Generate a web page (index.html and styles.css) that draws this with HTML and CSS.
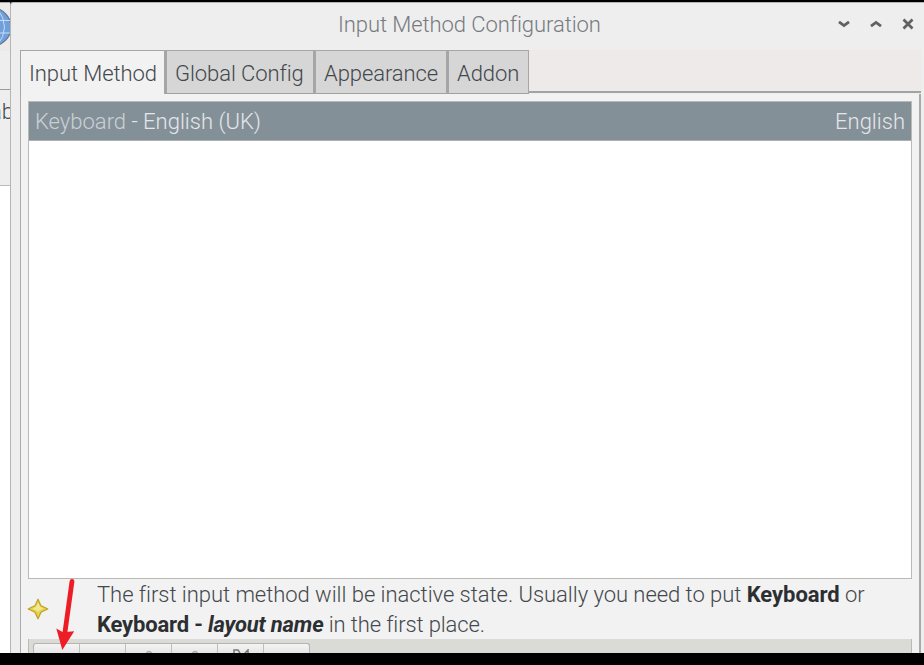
FILE: index.html
```
<!DOCTYPE html>
<html lang="en">
<head>
<meta charset="utf-8">
<title>Input Method Configuration</title>
<link rel="stylesheet" href="styles.css">
</head>
<body>
<div class="screen">
  <aside class="behind">
    <div class="behind-tools">
      <svg class="globe" viewBox="0 0 11 44" width="11" height="44">
        <circle cx="-8" cy="20" r="19" fill="#70a0dc" stroke="#5c7894" stroke-width="1.2"/>
        <path d="M0 13.5H10M0 26H10M-3 1Q12 20-3 39M-6 1Q-2 20-6 39" fill="none" stroke="#c8dcf2" stroke-width="1"/>
      </svg>
    </div>
    <div class="behind-tab"><span class="behind-label">ab</span></div>
    <div class="behind-page"></div>
  </aside>
  <main class="window">
    <header class="titlebar">
      <h1 class="title">Input Method Configuration</h1>
      <div class="controls">
        <svg width="12" height="12" viewBox="0 0 12 12"><path d="M1 3.8L6 7.6L11 3.8"/></svg>
        <svg width="12" height="12" viewBox="0 0 12 12"><path d="M1 8.2L6 4.4L11 8.2"/></svg>
        <svg width="12" height="12" viewBox="0 0 12 12"><path d="M1.5 1.5L10.5 10.5M10.5 1.5L1.5 10.5"/></svg>
      </div>
    </header>
    <nav class="tabs">
      <div class="tab tab-input"><span>Input Method</span></div>
      <div class="tab tab-global"><span>Global Config</span></div>
      <div class="tab tab-look"><span>Appearance</span></div>
      <div class="tab tab-addon"><span>Addon</span></div>
      <div class="tab-rest"></div>
    </nav>
    <section class="page">
      <div class="list">
        <div class="row"><span class="name"><span class="blurred">Keyboard</span> - English (UK)</span><span class="lang">English</span></div>
      </div>
      <div class="hint">
        <svg class="star" width="22" height="22" viewBox="0 0 22 22"><path d="M11 1.2Q12.5 4.8 14 7.8Q17.5 9.4 20.8 11Q17.5 12.6 14 14.2Q12.6 17.4 11 20.8Q9.4 17.4 8 14.2Q4.5 12.6 1.2 11Q4.5 9.4 8 7.8Q9.5 4.8 11 1.2Z" fill="#e6d24c" stroke="#c0a024" stroke-width="1.2" stroke-linejoin="round"/><path d="M11 4.5L13 8.8L16.5 11L13 12L11 14L9 12L5.5 11L9 8.8Z" fill="#f1e894"/></svg>
        <p class="hint-text"><span class="line line-a">The first input method will be inactive state. Usually you need to put <b>Keyboard</b> or</span><span class="line line-b"><b>Keyboard - <i>layout name</i></b> in the first place.</span></p>
      </div>
      <div class="toolbar">
        <div class="buttons">
          <span class="button"></span><span class="button"></span>
          <span class="button"><svg width="12" height="3"><path d="M3 4Q6 -1 9 4"/></svg></span>
          <span class="button"><svg width="12" height="3"><path d="M3 4Q6 -1 9 4"/></svg></span>
          <span class="button"><svg class="tools" width="20" height="4"><path d="M3 4V1H7L9 4M14 4L17 1V4"/></svg></span>
          <span class="button"></span>
        </div>
      </div>
    </section>
  </main>
  <svg class="arrow" width="30" height="76" viewBox="0 0 30 76"><path d="M20 6.3L13 57" stroke="#ee1c25" stroke-width="4.8" stroke-linecap="round"/><path d="M4.3 53.5L11 57.3L22.2 56.3L10.3 75Z" fill="#ee1c25"/></svg>
</div>
</body>
</html>
```
FILE: styles.css
```
* { box-sizing: border-box; }
body { margin: 0; background: #000; }
.screen {
  position: relative;
  display: flex;
  width: 924px;
  height: 665px;
  padding: 2px 0 12px;
  overflow: hidden;
  font: 300 22px/30px Roboto, "Liberation Sans", sans-serif;
  color: #43484c;
}
.behind {
  display: flex;
  flex-direction: column;
  width: 10px;
  overflow: hidden;
  background: #f0eff0;
  border-top: 1px solid #a8a8a8;
}
.behind-tools { height: 87px; padding-top: 4px; border-bottom: 1px solid #9c9c9c; background: linear-gradient(#eeeae9 48px, #eee 48px); }
.globe { display: block; }
.behind-tab { height: 96px; padding-top: 7px; border-bottom: 1px solid #bbb; background: #eee; }
.behind-label { display: block; margin-left: -10px; }
.behind-page { flex: 1; background: #fff; }
.window {
  display: flex;
  flex-direction: column;
  width: 914px;
  background: #eee;
  border: solid #b5b5b5;
  border-width: 1px 0 0 1px;
  border-radius: 3px 0 0 0;
}
.titlebar { position: relative; flex: none; height: 47px; }
.title {
  margin: 0 0 0 327px;
  padding-top: 7px;
  font-size: 22px;
  font-weight: 300;
  line-height: 30px;
  letter-spacing: -0.07px;
  color: #777b80;
  white-space: nowrap;
}
.controls { position: absolute; top: 15px; left: 827px; display: flex; gap: 20px; }
.controls path { fill: none; stroke: #616161; stroke-width: 2.8; }
.tabs { display: flex; flex: none; height: 44px; margin-left: 9px; width: 901px; letter-spacing: -0.08px; }
.tab {
  flex: none;
  height: 44px;
  padding: 8px 0 0 8px;
  border: 1px solid #a6a6a6;
  border-left-width: 2px;
  border-bottom-color: #a0a0a0;
  background: #d6d6d6;
  white-space: nowrap;
}
.tab-input { width: 145px; border-left-width: 1px; border-bottom: 0; background: #f2f2f2; }
.tab-global { width: 149px; }
.tab-look { width: 133px; }
.tab-addon { width: 82px; }
.tab-rest { flex: 1; margin-bottom: 1px; border-bottom: 2px solid #a3a3a3; background: #eeeae9; }
.page {
  flex: 1;
  width: 901px;
  margin-left: 9px;
  padding: 7px 7px 0;
  border: solid #aaa;
  border-width: 0 2px 0 1px;
  background: #f2f2f2;
}
.list { height: 478px; border: 1px solid #b9b9b6; background: #fff; }
.row {
  display: flex;
  justify-content: space-between;
  height: 39px;
  padding: 5px 6px 0;
  border-bottom: 1px solid #a9b1b6;
  background: #849098;
  color: #e4e7e9;
  white-space: nowrap;
}
.blurred { color: #c9d0d5; }
.hint { display: flex; height: 60px; }
.star { flex: none; margin: 19px 0 0 -1px; }
.hint-text { margin: 1px 0 0 48px; white-space: nowrap; }
.line { display: block; line-height: 30px; letter-spacing: -0.035px; }
.line-b { letter-spacing: -0.12px; }
.hint b { font-weight: 700; color: #2c2f32; }
.line-b b { letter-spacing: -0.18px; }
.toolbar { height: 14px; padding: 4px 0 0 4px; border-left: 1px solid #b9b9b6; border-right: 1px solid #b9b9b6; background: #dadbd6; overflow: hidden; }
.buttons { display: flex; width: 277px; height: 10px; border: solid #b4b5b0; border-width: 1px 1px 0; border-radius: 3px 3px 0 0; background: linear-gradient(#f4f4f4, #e6e6e6); }
.button { display: flex; flex: none; width: 46px; justify-content: center; align-items: flex-end; border-right: 1px solid #bebfba; }
.button:last-child { border-right: 0; }
.button path { fill: none; stroke: #aaa; stroke-width: 1.5; }
.button .tools path { stroke: #777; }
.arrow { position: absolute; left: 52px; top: 575px; }
```
